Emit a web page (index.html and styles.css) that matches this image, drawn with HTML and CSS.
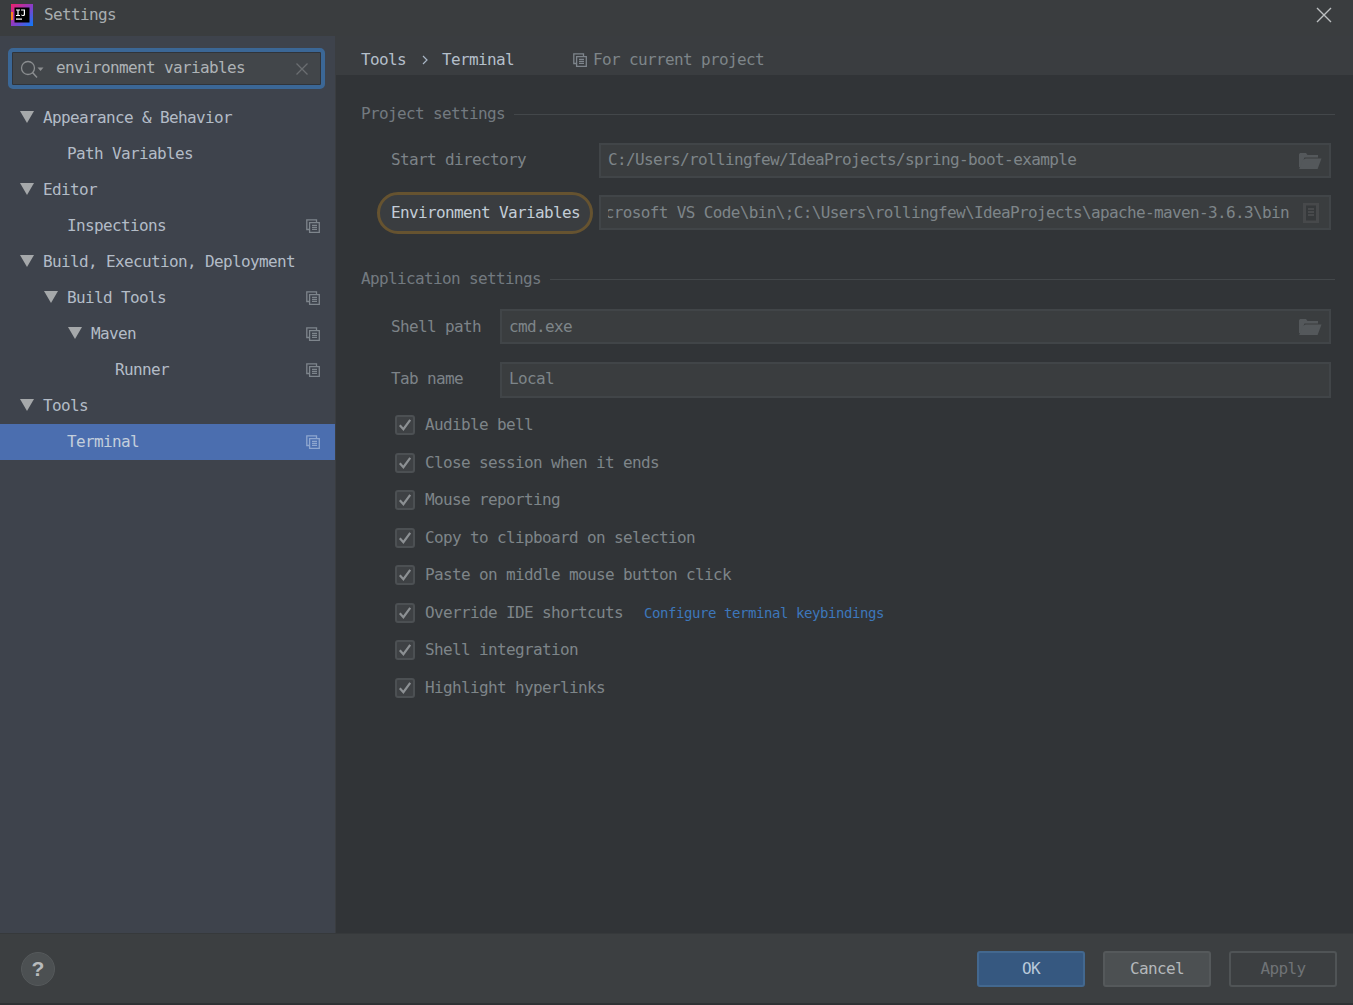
FILE: index.html
```html
<!DOCTYPE html>
<html lang="en">
<head>
<meta charset="utf-8">
<title>Settings</title>
<link rel="stylesheet" href="styles.css">
</head>
<body>
<svg class="defs" width="0" height="0" aria-hidden="true">
  <defs>
    <symbol id="copy" viewBox="0 0 14 14">
      <path d="M3.5 10.5H.8V.8h9.7v2.7" fill="none" stroke="currentColor" stroke-width="1.3"/>
      <path d="M3.600 3.600h9.700v9.700H3.600z" fill="none" stroke="currentColor" stroke-width="1.3"/>
      <path d="M6 6.400h5M6 8.400h5M6 10.400h5" stroke="currentColor" stroke-width="1.1"/>
    </symbol>
    <symbol id="folder" viewBox="0 0 24 17">
      <path d="M1 15V2.200L2 1h6l1.500 2H20v2.400H6.500L2.500 15z" fill="currentColor"/>
      <path d="M7.600 6.600H23.500L19.600 17H1.200l3.400-9z" fill="currentColor"/>
    </symbol>
    <symbol id="check" viewBox="0 0 16 16">
      <path d="M2.800 8.200l3.600 4 6.800-9.400" fill="none" stroke="currentColor" stroke-width="2.200"/>
    </symbol>
    <symbol id="arrow" viewBox="0 0 14 12">
      <path d="M0 0h14L7 12z" fill="currentColor"/>
    </symbol>
  </defs>
</svg>
<div class="window">
  <header class="titlebar">
    <div class="title-left">
      <svg class="logo" width="22" height="22" viewBox="0 0 22 22">
        <defs>
          <linearGradient id="lg" x1="0" y1="0" x2="1" y2="1">
            <stop offset="0" stop-color="#f0206a"/>
            <stop offset=".5" stop-color="#8d3bc5"/>
            <stop offset="1" stop-color="#087cfa"/>
          </linearGradient>
        </defs>
        <rect width="22" height="22" fill="url(#lg)"/>
        <path d="M0 8h2v8H0z" fill="#fc801d"/>
        <rect x="3.500" y="3.500" width="15" height="15" fill="#000"/>
        <path d="M5 5.500h4v1H7.600v4.400H9v1H5v-1h1.400V6.500H5zM10 5.500h4v5c0 1-.8 1.500-2 1.500-.8 0-1.500-.3-2-.9l.7-.7c.4.400.8.600 1.300.600.500 0 .8-.2.800-.7V6.500H10z" fill="#fff"/>
        <path d="M5 14.500h6v1.200H5z" fill="#fff"/>
      </svg>
      <span class="title-text">Settings</span>
    </div>
    <svg class="close" width="16" height="16" viewBox="0 0 16 16">
      <path d="M1 1l14 14M15 1L1 15" stroke="#bcbfc1" stroke-width="1.400" fill="none"/>
    </svg>
  </header>
  <div class="main">
    <aside class="sidebar">
      <div class="search-wrap">
        <div class="search">
          <svg class="search-icon" width="24" height="20" viewBox="0 0 24 20">
            <circle cx="8" cy="8" r="6.500" fill="none" stroke="#8b8e90" stroke-width="1.300"/>
            <path d="M12.500 12.500l4.500 5" stroke="#8b8e90" stroke-width="1.500"/>
            <path d="M17.500 7.500h6l-3 3.500z" fill="#8b8e90"/>
          </svg>
          <span class="search-text">environment variables</span>
          <svg class="search-clear" width="12" height="12" viewBox="0 0 12 12">
            <path d="M.5.500l11 11M11.500.500l-11 11" stroke="#6a6e71" stroke-width="1.300" fill="none"/>
          </svg>
        </div>
      </div>
      <nav class="tree">
        <div class="row lvl0"><svg class="arrow"><use href="#arrow"/></svg><span>Appearance &amp; Behavior</span></div>
        <div class="row lvl1 leaf"><span>Path Variables</span></div>
        <div class="row lvl0"><svg class="arrow"><use href="#arrow"/></svg><span>Editor</span></div>
        <div class="row lvl1 leaf"><span>Inspections</span><svg class="copy"><use href="#copy"/></svg></div>
        <div class="row lvl0"><svg class="arrow"><use href="#arrow"/></svg><span>Build, Execution, Deployment</span></div>
        <div class="row lvl1"><svg class="arrow"><use href="#arrow"/></svg><span>Build Tools</span><svg class="copy"><use href="#copy"/></svg></div>
        <div class="row lvl2"><svg class="arrow"><use href="#arrow"/></svg><span>Maven</span><svg class="copy"><use href="#copy"/></svg></div>
        <div class="row lvl3 leaf"><span>Runner</span><svg class="copy"><use href="#copy"/></svg></div>
        <div class="row lvl0"><svg class="arrow"><use href="#arrow"/></svg><span>Tools</span></div>
        <div class="row lvl1 leaf selected"><span>Terminal</span><svg class="copy"><use href="#copy"/></svg></div>
      </nav>
    </aside>
    <section class="content">
      <div class="crumbs">
        <span class="crumb">Tools</span>
        <svg class="crumb-sep" width="6" height="10" viewBox="0 0 6 10"><path d="M1 1l4 4-4 4" fill="none" stroke="#a9b7c6" stroke-width="1.200"/></svg>
        <span class="crumb">Terminal</span>
        <span class="scope"><svg class="copy scope-icon"><use href="#copy"/></svg>For current project</span>
      </div>
      <div class="panel">
        <div class="group-title first"><span>Project settings</span><i></i></div>
        <div class="field-list">
          <div class="field wide lift">
            <span class="label">Start directory</span>
            <div class="input"><span class="val">C:/Users/rollingfew/IdeaProjects/spring-boot-example</span><svg class="folder"><use href="#folder"/></svg></div>
          </div>
          <div class="field wide">
            <span class="label hl">Environment Variables</span>
            <div class="input"><span class="val clipped"><span class="nw">crosoft VS Code\bin\;C:\Users\rollingfew\IdeaProjects\apache-maven-3.6.3\bin</span></span>
              <svg class="doc" width="16" height="20" viewBox="0 0 16 20"><path d="M0 0h16v20H0z" fill="#47494b"/><path d="M3 2.500h10v15H3z" fill="#36393b"/><path d="M5 6h6M5 9h6M5 12h6" stroke="#5a5d5f" stroke-width="1.200"/></svg>
            </div>
          </div>
        </div>
        <div class="group-title second"><span>Application settings</span><i></i></div>
        <div class="field-list app">
          <div class="field narrow">
            <span class="label">Shell path</span>
            <div class="input"><span class="val">cmd.exe</span><svg class="folder"><use href="#folder"/></svg></div>
          </div>
          <div class="field narrow lift tab">
            <span class="label">Tab name</span>
            <div class="input"><span class="val">Local</span></div>
          </div>
        </div>
        <div class="checks">
          <div class="check"><span class="box"><svg><use href="#check"/></svg></span><span>Audible bell</span></div>
          <div class="check"><span class="box"><svg><use href="#check"/></svg></span><span>Close session when it ends</span></div>
          <div class="check"><span class="box"><svg><use href="#check"/></svg></span><span>Mouse reporting</span></div>
          <div class="check"><span class="box"><svg><use href="#check"/></svg></span><span>Copy to clipboard on selection</span></div>
          <div class="check"><span class="box"><svg><use href="#check"/></svg></span><span>Paste on middle mouse button click</span></div>
          <div class="check"><span class="box"><svg><use href="#check"/></svg></span><span>Override IDE shortcuts</span><a class="link">Configure terminal keybindings</a></div>
          <div class="check"><span class="box"><svg><use href="#check"/></svg></span><span>Shell integration</span></div>
          <div class="check"><span class="box"><svg><use href="#check"/></svg></span><span>Highlight hyperlinks</span></div>
        </div>
      </div>
    </section>
  </div>
  <footer class="footer">
    <div class="help">?</div>
    <div class="buttons">
      <button class="btn ok">OK</button>
      <button class="btn">Cancel</button>
      <button class="btn off">Apply</button>
    </div>
  </footer>
  <div class="strip"></div>
</div>
</body>
</html>
```
FILE: styles.css
```css
* { box-sizing: border-box; }
html, body { margin: 0; padding: 0; height: 100%; overflow: hidden; }
body { background: #2f3234; font: 16px/20px "DejaVu Sans Mono", "Liberation Mono", monospace; letter-spacing: -.63px; color: #a9b7c6; }
.defs { position: absolute; }
.window { height: 1005px; display: flex; flex-direction: column; }
.titlebar { height: 36px; flex: none; background: #3a3d3f; display: flex; align-items: center; justify-content: space-between; padding: 0 21px 6px 11px; }
.title-left { display: flex; align-items: center; gap: 11px; }
.title-text { color: #a8adb0; }
.main { flex: 1; display: flex; min-height: 0; }
.sidebar { width: 336px; flex: none; background: #3e434c; border-right: 1px solid #3a3d40; }
.search-wrap { padding: 12px 10px 11px 8px; }
.search { height: 41px; border: 4px solid #3b6796; border-radius: 5px; background: #42464a; display: flex; align-items: center; padding: 0 13px 2px 8px; gap: 12px; box-shadow: inset 0 0 0 1px #30343a; }
.search-icon { flex: none; margin-top: 4px; }
.search-clear { margin-top: 2px; }
.search-text { flex: 1; color: #aeb3b6; }
.tree { display: flex; flex-direction: column; }
.row { height: 36px; display: flex; align-items: center; color: #b3bcc7; padding-right: 15px; }
.row span { flex: 1; }
.arrow { width: 14px; height: 12px; flex: none; color: #a5a8aa; margin: -2px 9px 0 0; }
.lvl0 { padding-left: 20px; }
.lvl1 { padding-left: 44px; }
.lvl2 { padding-left: 68px; }
.lvl3 { padding-left: 92px; }
.lvl1.leaf { padding-left: 67px; }
.lvl3.leaf { padding-left: 115px; }
.copy { width: 14px; height: 14px; flex: none; color: #7e858c; }
.selected { background: #4b6eaf; color: #c3cfdc; }
.selected .copy { color: #8ea6cf; }
.content { flex: 1; min-width: 0; background: #313437; display: flex; flex-direction: column; }
.crumbs { height: 39px; flex: none; background: #3a3d40; display: flex; align-items: center; padding: 8px 0 0 25px; color: #b4bfca; }
.crumb-sep { margin: 0 14px 0 16px; }
.scope { display: flex; align-items: center; gap: 6px; margin-left: 59px; color: #7e8589; }
.scope-icon { color: #7e858c; }
.panel { flex: 1; padding: 0 18px 0 25px; }
.group-title { display: flex; align-items: center; gap: 9px; color: #737a80; height: 20px; }
.group-title i { flex: 1; height: 1px; background: #43474a; }
.group-title.first { margin-top: 29px; }
.group-title.second { margin-top: 39px; }
.field-list { display: flex; flex-direction: column; gap: 17px; margin-top: 19px; padding: 0 4px 0 30px; }
.field-list.app { margin-top: 20px; gap: 18px; }
.field { display: flex; align-items: center; height: 35px; }
.field.tab { height: 36px; }
.label { color: #7d8388; flex: none; }
.wide .label { width: 208px; }
.narrow .label { width: 109px; }
.lift .label, .lift .val { margin-bottom: 2px; }
.hl { position: relative; color: #c3cdd7; z-index: 0; }
.hl::before { content: ""; box-sizing: border-box; position: absolute; left: -14px; top: -11px; width: 216px; height: 42px; border: 3px solid #665330; border-radius: 21px; background: #3a3d40; z-index: -1; }
.input { flex: 1; min-width: 0; height: 100%; border: 2px solid #414548; background: #3a3d3f; display: flex; align-items: center; padding: 0 7px; color: #7e8589; }
.val { flex: 1; min-width: 0; white-space: nowrap; overflow: hidden; }
.clipped { display: flex; justify-content: flex-end; margin-right: 14px; }
.nw { flex: none; }
.folder { width: 24px; height: 17px; flex: none; color: #54585b; }
.doc { flex: none; margin-right: 3px; }
.checks { margin: 17px 0 0 34px; display: flex; flex-direction: column; gap: 17.500px; }
.check { height: 20px; display: flex; align-items: center; gap: 10px; color: #7e8589; }
.box { width: 20px; height: 20px; flex: none; border: 2px solid #4c5053; border-radius: 3px; background: #3e4144; display: block; color: #8c9093; }
.box svg { display: block; width: 16px; height: 16px; }
.link { margin-left: 11px; color: #3d77bb; font-size: 14px; letter-spacing: -.43px; }
.footer { height: 70px; flex: none; background: #3c3f41; border-top: 1px solid #36393b; display: flex; align-items: center; justify-content: space-between; padding: 0 16px 0 21px; }
.help { width: 34px; height: 34px; border-radius: 50%; background: #4c5052; border: 1px solid #55595b; color: #b8bbbd; font: bold 21px/32px "Liberation Sans", sans-serif; letter-spacing: 0; text-align: center; }
.buttons { display: flex; gap: 18px; }
.btn { width: 108px; height: 36px; border-radius: 3px; font: inherit; letter-spacing: inherit; background: #4c5052; border: 2px solid #55595b; color: #b4b8bb; padding: 0; }
.ok { background: #365880; border-color: #43688f; color: #b9c9da; }
.off { background: #3c3f41; border-color: #505456; color: #6f7376; }
.strip { height: 2px; flex: none; background: #2f3234; }
```
